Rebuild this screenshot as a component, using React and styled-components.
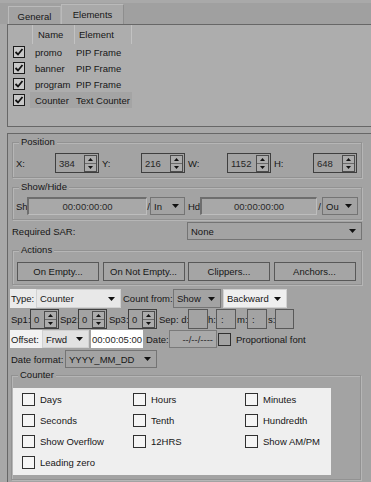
import React from 'react';
import styled, { createGlobalStyle } from 'styled-components';

const GlobalStyle = createGlobalStyle`
  html, body { margin: 0; padding: 0; background: #a8a8a8; }
  body {
    font-family: "Liberation Sans", Arial, sans-serif;
    font-size: 9.5px;
    color: #161616;
  }
  * { box-sizing: border-box; }
`;

const Window = styled.div`
  width: 371px;
  height: 482px;
  overflow: hidden;
  background: #a8a8a8;
  display: flex;
  flex-direction: column;
`;

const TabStrip = styled.div`
  height: 24px;
  flex: none;
  background: linear-gradient(#a9a9a9 0 3px, #a0a0a0 3px);
  display: flex;
  align-items: flex-end;
  padding-left: 8px;
`;

const Tab = styled.div`
  height: ${p => (p.$active ? 20 : 18)}px;
  width: ${p => (p.$active ? 63 : 53)}px;
  border: 1px solid #bababa;
  border-bottom: none;
  border-right-color: ${p => (p.$active ? '#8e8e8e' : '#b0b0b0')};
  background: ${p => (p.$active ? '#a9a9a9' : '#a2a2a2')};
  display: flex;
  align-items: center;
  justify-content: center;
  padding-top: ${p => (p.$active ? 0 : 1)}px;
`;

const ListPanel = styled.div`
  flex: none;
  height: 103px;
  margin-left: 7px;
  border: 1px solid #676767;
  border-right: none;
  background: #adadad;
`;

const HeaderRow = styled.div`
  display: grid;
  grid-template-columns: 25px 42px 57px;
  height: 19px;
`;

const HeaderCell = styled.div`
  border-right: 1px solid #c2c2c2;
  padding-left: ${p => p.$pad || 0}px;
  display: flex;
  align-items: center;
`;

const ListRow = styled.div`
  display: grid;
  grid-template-columns: 22px 45px 57px;
  height: 16px;
  align-items: stretch;
`;

const CheckCell = styled.div`
  display: flex;
  align-items: center;
  padding-left: 5px;
`;

const TextCell = styled.div`
  display: flex;
  align-items: center;
  padding-left: ${p => p.$pad}px;
  white-space: nowrap;
  background: ${p => (p.$selected ? '#a4a4a4' : 'transparent')};
`;

const ListCheck = styled.div`
  width: 12px;
  height: 12px;
  border: 1px solid #1c1c1c;
  background: #c9c9c9;
  display: flex;
  align-items: center;
  justify-content: center;
`;

const LowerPanel = styled.div`
  flex: 1;
  margin: 6px 0 0 7px;
  border-left: 1px solid #676767;
  border-top: 1px solid #676767;
  background: #a3a3a3;
  padding: 3px 0 0 2px;
  display: flex;
  flex-direction: column;
`;

const Group = styled.div`
  margin: ${p => p.$top}px 0 0 ${p => (p.$left ?? 2)}px;
  width: ${p => p.$width || 350}px;
  border: 1px solid #929292;
  box-shadow: inset 1px 1px 0 #b6b6b6, 1px 1px 0 #b6b6b6;
  padding: 0 3px ${p => p.$bottom || 4}px ${p => p.$padLeft ?? 3}px;
  display: flex;
  flex-direction: column;
  align-items: flex-start;
`;

const GroupTitle = styled.div`
  margin: -7px 0 0 ${p => p.$indent || 3}px;
  padding: 0 2px;
  line-height: 12px;
  background: #a3a3a3;
`;

const Row = styled.div`
  display: flex;
  align-items: center;
  height: ${p => p.$h}px;
  margin-top: ${p => p.$top || 0}px;
  flex: none;
`;

const Label = styled.div`
  width: ${p => p.$w}px;
  flex: none;
  height: 100%;
  display: flex;
  align-items: center;
  justify-content: ${p => (p.$center ? 'center' : 'flex-start')};
  padding-left: ${p => p.$pad || 0}px;
  margin-left: ${p => p.$ml || 0}px;
  background: ${p => p.$bg || 'transparent'};
  white-space: nowrap;
`;

const SpinBox = styled.div`
  width: ${p => p.$w}px;
  height: 20px;
  flex: none;
  border: 1px solid #3f3f3f;
  display: flex;
  align-items: center;
  padding: 0 1px 0 3px;
  color: #262626;
`;

const SpinValue = styled.span`
  flex: 1;
`;

const SpinButtons = styled.div`
  width: 13px;
  height: 17px;
  border: 1px solid #4d4d4d;
  background: #acacac;
  display: flex;
  flex-direction: column;
`;

const SpinHalf = styled.div`
  flex: 1;
  display: flex;
  align-items: center;
  justify-content: center;
  border-top: ${p => (p.$lower ? '1px solid #6a6a6a' : 'none')};
`;

const Sunken = styled.div`
  width: ${p => p.$w}px;
  height: ${p => p.$h || 18}px;
  flex: none;
  margin-left: ${p => p.$ml || 0}px;
  border-top: 2px solid #6e6e6e;
  border-left: 2px solid #6e6e6e;
  border-bottom: 1px solid #bdbdbd;
  border-right: 1px solid #bdbdbd;
  background: #a8a8a8;
  display: flex;
  align-items: center;
  justify-content: center;
  color: #2a2a2a;
`;

const Select = styled.div`
  width: ${p => p.$w}px;
  height: ${p => p.$h || 18}px;
  flex: none;
  margin-left: ${p => p.$ml || 0}px;
  border: 1px solid ${p => (p.$light ? '#d2d2d2' : '#747474')};
  background: ${p => p.$bg || '#a3a3a3'};
  display: flex;
  align-items: center;
  justify-content: space-between;
  padding: 0 5px 0 3px;
  white-space: nowrap;
  overflow: hidden;
`;

const Button = styled.div`
  width: 82px;
  height: 19px;
  flex: none;
  border: 1px solid #585858;
  background: #a5a5a5;
  display: flex;
  align-items: center;
  justify-content: center;
  white-space: nowrap;
`;

const ButtonRow = styled.div`
  display: flex;
  gap: 3.5px;
  margin-top: 6px;
  padding-left: 1px;
`;

const SmallBox = styled.div`
  width: ${p => p.$w}px;
  height: 20px;
  flex: none;
  border: 1px solid #595959;
  display: flex;
  align-items: center;
  padding-left: 4px;
`;

const TimeBox = styled.div`
  width: ${p => p.$w}px;
  height: 18px;
  flex: none;
  margin-left: ${p => p.$ml || 0}px;
  background: ${p => p.$bg || '#ffffff'};
  border: ${p => (p.$border ? '1px solid #7a7a7a' : 'none')};
  display: flex;
  align-items: center;
  justify-content: ${p => (p.$right ? 'flex-end' : 'center')};
  padding-right: ${p => (p.$right ? 3 : 0)}px;
  color: #262626;
`;

const Check = styled.div`
  width: 13px;
  height: 13px;
  flex: none;
  margin-left: ${p => p.$ml || 0}px;
  border: 1px solid #303030;
  background: ${p => p.$bg || 'transparent'};
`;

const CounterInner = styled.div`
  margin-top: 7px;
  width: 318px;
  height: 87px;
  background: #efefef;
  display: grid;
  grid-template-columns: 111px 112px 95px;
  grid-auto-rows: 13px;
  row-gap: 8px;
  padding: 5px 0 0 9px;
`;

const Option = styled.div`
  display: flex;
  align-items: center;
  gap: 5px;
  white-space: nowrap;
`;

const Arrow = ({ up }) => (
  <svg width="7" height="4" viewBox="0 0 7 4">
    <polygon points={up ? '0,4 7,4 3.5,0' : '0,0 7,0 3.5,4'} fill="#111" />
  </svg>
);

const SmallArrow = ({ up }) => (
  <svg width="5" height="3" viewBox="0 0 5 3">
    <polygon points={up ? '0,3 5,3 2.5,0' : '0,0 5,0 2.5,3'} fill="#111" />
  </svg>
);

const Spin = ({ value, w }) => (
  <SpinBox $w={w}>
    <SpinValue>{value}</SpinValue>
    <SpinButtons>
      <SpinHalf><SmallArrow up /></SpinHalf>
      <SpinHalf $lower><SmallArrow /></SpinHalf>
    </SpinButtons>
  </SpinBox>
);

const Drop = ({ children, ...rest }) => (
  <Select {...rest}>
    <span>{children}</span>
    <Arrow />
  </Select>
);

const elements = [
  { name: 'promo', kind: 'PIP Frame' },
  { name: 'banner', kind: 'PIP Frame' },
  { name: 'program', kind: 'PIP Frame' },
  { name: 'Counter', kind: 'Text Counter', selected: true },
];

const options = [
  'Days', 'Hours', 'Minutes',
  'Seconds', 'Tenth', 'Hundredth',
  'Show Overflow', '12HRS', 'Show AM/PM',
  'Leading zero',
];

export default function App() {
  return (
    <Window>
      <GlobalStyle />
      <TabStrip>
        <Tab>General</Tab>
        <Tab $active>Elements</Tab>
      </TabStrip>

      <ListPanel>
        <HeaderRow>
          <HeaderCell />
          <HeaderCell $pad={5}>Name</HeaderCell>
          <HeaderCell $pad={4}>Element</HeaderCell>
        </HeaderRow>
        {elements.map(el => (
          <ListRow key={el.name}>
            <CheckCell>
              <ListCheck>
                <svg width="10" height="10" viewBox="0 0 10 10">
                  <polyline points="1.5,5 4,7.5 8.5,2" fill="none" stroke="#111" strokeWidth="1.8" />
                </svg>
              </ListCheck>
            </CheckCell>
            <TextCell $pad={5} $selected={el.selected}>{el.name}</TextCell>
            <TextCell $pad={1} $selected={el.selected}>{el.kind}</TextCell>
          </ListRow>
        ))}
      </ListPanel>

      <LowerPanel>
        <Group $top={5}>
          <GroupTitle>Position</GroupTitle>
          <Row $h={20} $top={5}>
            <Label $w={39}>X:</Label>
            <Spin value="384" w={44} />
            <Label $w={39} $ml={3}>Y:</Label>
            <Spin value="216" w={44} />
            <Label $w={39} $ml={3}>W:</Label>
            <Spin value="1152" w={44} />
            <Label $w={39} $ml={3}>H:</Label>
            <Spin value="648" w={44} />
          </Row>
        </Group>

        <Group $top={9}>
          <GroupTitle>Show/Hide</GroupTitle>
          <Row $h={18} $top={4}>
            <Label $w={11}>Sh</Label>
            <Sunken $w={120}>00:00:00:00</Sunken>
            <Label $w={3} $center>/</Label>
            <Drop $w={35}>In</Drop>
            <Label $w={12} $ml={3}>Hd</Label>
            <Sunken $w={117}>00:00:00:00</Sunken>
            <Label $w={5} $center>/</Label>
            <Drop $w={36}>Ou</Drop>
          </Row>
        </Group>

        <Row $h={18} $top={2}>
          <Label $w={177} $pad={2}>Required SAR:</Label>
          <Drop $w={175}>None</Drop>
        </Row>

        <Group $top={10} $bottom={3}>
          <GroupTitle>Actions</GroupTitle>
          <ButtonRow>
            <Button>On Empty...</Button>
            <Button>On Not Empty...</Button>
            <Button>Clippers...</Button>
            <Button>Anchors...</Button>
          </ButtonRow>
        </Group>

        <Row $h={19} $top={4}>
          <Label $w={26} $pad={1} $bg="#ebebeb">Type:</Label>
          <Drop $w={85} $h={19} $light $bg="#e8e8e8">Counter</Drop>
          <Label $w={50} $ml={2}>Count from:</Label>
          <Drop $w={48} $h={19}>Show</Drop>
          <Drop $w={64} $h={19} $ml={2} $light $bg="#efefef">Backward</Drop>
        </Row>

        <Row $h={20} $top={1}>
          <Label $w={20} $pad={1}>Sp1:</Label>
          <Spin value="0" w={29} />
          <Label $w={19} $pad={1}>Sp2:</Label>
          <Spin value="0" w={29} />
          <Label $w={21} $pad={2}>Sp3:</Label>
          <Spin value="0" w={29} />
          <Label $w={31} $pad={2}>Sep: d:</Label>
          <SmallBox $w={20} />
          <Label $w={8}>h:</Label>
          <SmallBox $w={20}>:</SmallBox>
          <Label $w={11} $pad={1}>m:</Label>
          <SmallBox $w={20}>:</SmallBox>
          <Label $w={8} $pad={1}>s:</Label>
          <SmallBox $w={19} />
        </Row>

        <Row $h={18} $top={1}>
          <Label $w={32} $pad={1} $bg="#f2f2f2">Offset:</Label>
          <Drop $w={47} $light $bg="#e2e2e2">Frwd</Drop>
          <TimeBox $w={52} $ml={2}>00:00:05:00</TimeBox>
          <Label $w={23} $ml={3}>Date:</Label>
          <TimeBox $w={48} $bg="#a9a9a9" $border $right>--/--/----</TimeBox>
          <Check $ml={1} />
          <Label $w={90} $ml={5}>Proportional font</Label>
        </Row>

        <Row $h={18} $top={2}>
          <Label $w={55} $pad={1}>Date format:</Label>
          <Drop $w={92}>YYYY_MM_DD</Drop>
        </Row>

        <Group $top={7} $left={1} $padLeft={1} $bottom={4}>
          <GroupTitle $indent={5}>Counter</GroupTitle>
          <CounterInner>
            {options.map(opt => (
              <Option key={opt}>
                <Check $bg="#f5f5f5" />
                {opt}
              </Option>
            ))}
          </CounterInner>
        </Group>
      </LowerPanel>
    </Window>
  );
}
